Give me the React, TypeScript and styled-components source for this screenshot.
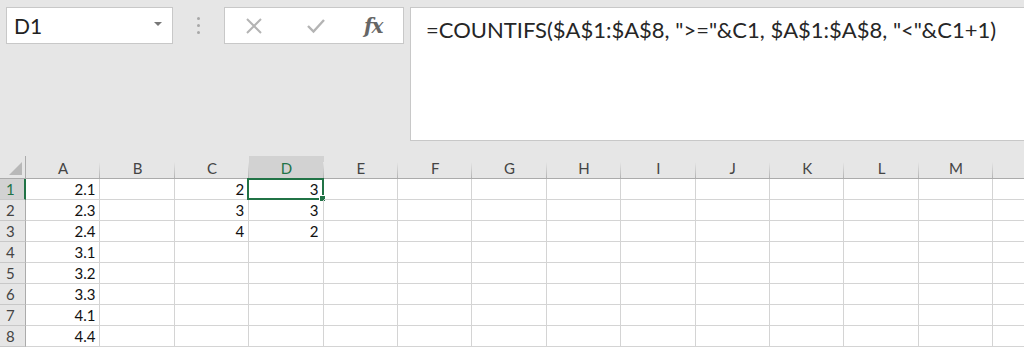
import React from "react";
import styled, { createGlobalStyle } from "styled-components";

const Global = createGlobalStyle`
  html, body { margin: 0; padding: 0; background: #e6e6e6; }
  body { width: 1024px; height: 347px; overflow: hidden; font-family: Lato, "Liberation Sans", sans-serif; }
`;

const Page = styled.div`
  width: 1024px;
  height: 347px;
  overflow: hidden;
  display: flex;
  flex-direction: column;
`;

const TopBar = styled.div`
  display: flex;
  align-items: flex-start;
  padding: 7px 0 0 6px;
  height: 150px;
  box-sizing: border-box;
`;

const NameBox = styled.div`
  width: 167px;
  height: 37px;
  box-sizing: border-box;
  background: #fff;
  border: 1px solid #c8c8c8;
  display: flex;
  align-items: center;
  justify-content: space-between;
  padding: 0 10px 0 7px;
  font-size: 21px;
  color: #222;
`;

const Caret = styled.span`
  width: 0;
  height: 0;
  border-left: 4px solid transparent;
  border-right: 4px solid transparent;
  border-top: 4px solid #777;
  margin-top: -3px;
`;

const Grip = styled.div`
  width: 51px;
  height: 37px;
  display: flex;
  flex-direction: column;
  align-items: center;
  justify-content: center;
  gap: 4px;
  & > i {
    width: 3px;
    height: 3px;
    border-radius: 50%;
    background: #a8a8a8;
  }
`;

const FxBox = styled.div`
  width: 180px;
  height: 37px;
  box-sizing: border-box;
  background: #fff;
  border: 1px solid #c8c8c8;
  display: flex;
  align-items: center;
  padding-left: 19px;
`;

const IconSlot = styled.div<{ $w: number }>`
  width: ${(p) => p.$w}px;
  display: flex;
  align-items: center;
`;

const Fx = styled.span`
  font-family: "DejaVu Serif", "Liberation Serif", serif;
  font-style: italic;
  font-weight: bold;
  font-size: 20px;
  color: #666;
  letter-spacing: -1px;
`;

const FormulaBar = styled.div`
  margin-left: 6px;
  flex: 1;
  height: 134px;
  box-sizing: border-box;
  background: #fff;
  border: 1px solid #c8c8c8;
  border-right: none;
  padding: 8px 0 0 15px;
  font-size: 22px;
  color: #262626;
  white-space: pre;
`;

const Grid = styled.div`
  display: grid;
  grid-template-columns: 26px repeat(14, 74.4px);
  grid-template-rows: 23px repeat(8, 21px);
  margin-top: 7px;
  background: #fff;
  font-size: 15px;
`;

const Corner = styled.div`
  background: #e6e6e6;
  border-right: 1px solid #ababab;
  border-bottom: 1px solid #ababab;
  position: relative;
  &::after {
    content: "";
    position: absolute;
    right: 3px;
    bottom: 3px;
    width: 0;
    height: 0;
    border-left: 13px solid transparent;
    border-bottom: 13px solid #b8b8b8;
  }
`;

const ColHead = styled.div<{ $sel?: boolean }>`
  background: ${(p) => (p.$sel ? "#d2d2d2" : "#e6e6e6")};
  border-bottom: 1px solid ${(p) => (p.$sel ? "#217346" : "#ababab")};
  color: ${(p) => (p.$sel ? "#217346" : "#444")};
  display: flex;
  align-items: center;
  justify-content: center;
  padding-top: 2px;
  box-sizing: border-box;
  position: relative;
  &::after {
    content: "";
    position: absolute;
    right: 0;
    bottom: 0;
    width: 1px;
    height: 16px;
    background: linear-gradient(#e6e6e6, #b4b4b4);
  }
`;

const RowHead = styled.div<{ $sel?: boolean }>`
  background: ${(p) => (p.$sel ? "#d2d2d2" : "#e6e6e6")};
  border-right: ${(p) => (p.$sel ? "2px solid #217346" : "1px solid #ababab")};
  border-bottom: 1px solid #c8c8c8;
  color: ${(p) => (p.$sel ? "#217346" : "#444")};
  display: flex;
  align-items: center;
  padding-left: 6px;
  box-sizing: border-box;
`;

const Cell = styled.div`
  border-right: 1px solid #d4d4d4;
  border-bottom: 1px solid #d4d4d4;
  box-sizing: border-box;
  display: flex;
  align-items: center;
  justify-content: flex-end;
  padding-right: 4px;
  color: #111;
  position: relative;
`;

const Active = styled.div`
  position: absolute;
  left: -2px;
  top: -1px;
  right: -1px;
  bottom: -1px;
  border: 2px solid #217346;
  pointer-events: none;
  &::after {
    content: "";
    position: absolute;
    right: -4px;
    bottom: -4px;
    width: 5px;
    height: 5px;
    background: #217346;
    border: 1px solid #fff;
  }
`;

const cols = ["A", "B", "C", "D", "E", "F", "G", "H", "I", "J", "K", "L", "M", "N"];
const colA = ["2.1", "2.3", "2.4", "3.1", "3.2", "3.3", "4.1", "4.4"];
const colC = ["2", "3", "4"];
const colD = ["3", "3", "2"];

const XIcon = () => (
  <svg width="20" height="20" viewBox="0 0 20 20">
    <path d="M3 3 L17 17 M17 3 L3 17" stroke="#b4b4b4" strokeWidth="2" fill="none" />
  </svg>
);

const CheckIcon = () => (
  <svg width="20" height="20" viewBox="0 0 20 20">
    <path d="M2 10 L7.5 15.5 L18 4" stroke="#b4b4b4" strokeWidth="2.4" fill="none" />
  </svg>
);

export default function App() {
  return (
    <Page>
      <Global />
      <TopBar>
        <NameBox>
          <span>D1</span>
          <Caret />
        </NameBox>
        <Grip>
          <i />
          <i />
          <i />
        </Grip>
        <FxBox>
          <IconSlot $w={62}>
            <XIcon />
          </IconSlot>
          <IconSlot $w={58}>
            <CheckIcon />
          </IconSlot>
          <IconSlot $w={30}>
            <Fx>fx</Fx>
          </IconSlot>
        </FxBox>
        <FormulaBar>{'=COUNTIFS($A$1:$A$8, ">="&C1, $A$1:$A$8, "<"&C1+1)'}</FormulaBar>
      </TopBar>
      <Grid>
        <Corner />
        {cols.map((c) => (
          <ColHead key={c} $sel={c === "D"}>
            {c}
          </ColHead>
        ))}
        {colA.map((a, r) => (
          <React.Fragment key={r}>
            <RowHead $sel={r === 0}>{r + 1}</RowHead>
            {cols.map((c) => (
              <Cell key={c}>
                {c === "A" ? a : c === "C" ? colC[r] : c === "D" ? colD[r] : null}
                {c === "D" && r === 0 ? <Active /> : null}
              </Cell>
            ))}
          </React.Fragment>
        ))}
      </Grid>
    </Page>
  );
}
